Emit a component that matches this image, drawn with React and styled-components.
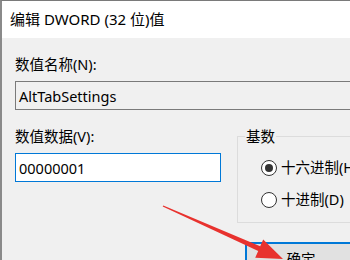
import styled, { createGlobalStyle } from "styled-components";

const GlobalStyle = createGlobalStyle`
  html, body {
    margin: 0;
    padding: 0;
    width: 350px;
    height: 260px;
    overflow: hidden;
    background: #f0f0f0;
  }
  body {
    font-family: "Noto Sans", "Noto Sans CJK SC", sans-serif;
    color: #000;
  }
`;

const Dialog = styled.div`
  position: relative;
  width: 440px;
  height: 260px;
  box-sizing: border-box;
  border-top: 1px solid #7a7a7a;
  border-left: 2px solid #8a8a8a;
  background: #f0f0f0;
  display: flex;
  flex-direction: column;
`;

const TitleBar = styled.div`
  height: 37px;
  flex: none;
  background: #ffffff;
  display: flex;
  align-items: center;
  padding-left: 8px;
  font-size: 15px;
  padding-bottom: 2px;
  box-sizing: border-box;
`;

const Body = styled.div`
  padding: 16px 0 0 13px;
  display: flex;
  flex-direction: column;
`;

const Label = styled.div`
  font-size: 14.5px;
  line-height: 20px;
  height: 20px;
`;

const TextField = styled.div`
  box-sizing: border-box;
  height: 29px;
  width: ${({ $width }) => $width}px;
  margin-top: 7px;
  padding-left: 3px;
  display: flex;
  align-items: center;
  font-size: 14.5px;
  border: 1px solid ${({ $focused }) => ($focused ? "#0078d7" : "#7a7a7a")};
  background: ${({ $focused }) => ($focused ? "#ffffff" : "#f0f0f0")};
`;

const Row = styled.div`
  display: flex;
  gap: 16px;
  margin-top: 16px;
  align-items: flex-start;
`;

const Column = styled.div`
  display: flex;
  flex-direction: column;
`;

const GroupBox = styled.fieldset`
  margin: 0;
  box-sizing: border-box;
  width: 160px;
  height: 97px;
  padding: 0 0 0 7px;
  border: 1px solid #dcdcdc;
  min-inline-size: 0;
`;

const Legend = styled.legend`
  padding: 0 1px;
  font-size: 14.5px;
  line-height: 20px;
`;

const RadioList = styled.div`
  display: flex;
  flex-direction: column;
  gap: 13px;
  padding: 12px 0 0 16px;
`;

const RadioRow = styled.div`
  display: flex;
  align-items: center;
  gap: 4px;
  font-size: 14.5px;
  line-height: 19px;
  white-space: nowrap;
`;

const RadioCircle = styled.span`
  width: 16px;
  height: 16px;
  box-sizing: border-box;
  border-radius: 50%;
  border: 1px solid #333333;
  background: #ffffff;
  display: flex;
  align-items: center;
  justify-content: center;
  flex: none;
  &::after {
    content: "";
    width: 8px;
    height: 8px;
    border-radius: 50%;
    background: ${({ $checked }) => ($checked ? "#333333" : "transparent")};
  }
`;

const Footer = styled.div`
  display: flex;
  margin-top: 19px;
  padding-left: 230px;
`;

const Button = styled.div`
  box-sizing: border-box;
  width: 112px;
  height: 32px;
  border: 2px solid #0078d7;
  background: #e1e1e1;
  display: flex;
  align-items: center;
  justify-content: center;
  font-size: 14.5px;
`;

const Arrow = styled.svg`
  position: absolute;
  left: -2px;
  top: -1px;
  width: 350px;
  height: 260px;
  pointer-events: none;
`;

export default function App() {
  return (
    <>
      <GlobalStyle />
      <Dialog>
        <TitleBar>编辑 DWORD (32 位)值</TitleBar>
        <Body>
          <Label>数值名称(N):</Label>
          <TextField $width={400}>AltTabSettings</TextField>
          <Row>
            <Column>
              <Label>数值数据(V):</Label>
              <TextField $width={206} $focused>
                00000001
              </TextField>
            </Column>
            <GroupBox>
              <Legend>基数</Legend>
              <RadioList>
                <RadioRow>
                  <RadioCircle $checked />
                  十六进制(H)
                </RadioRow>
                <RadioRow>
                  <RadioCircle />
                  十进制(D)
                </RadioRow>
              </RadioList>
            </GroupBox>
          </Row>
          <Footer>
            <Button>确定</Button>
          </Footer>
        </Body>
        <Arrow viewBox="0 0 350 260">
          <polygon
            fill="#e8322e"
            points="163.3,205.4 260.2,246.3 263.2,239.4 283,259 255.2,257.8 258.2,250.9 162.7,206.6"
          />
        </Arrow>
      </Dialog>
    </>
  );
}
